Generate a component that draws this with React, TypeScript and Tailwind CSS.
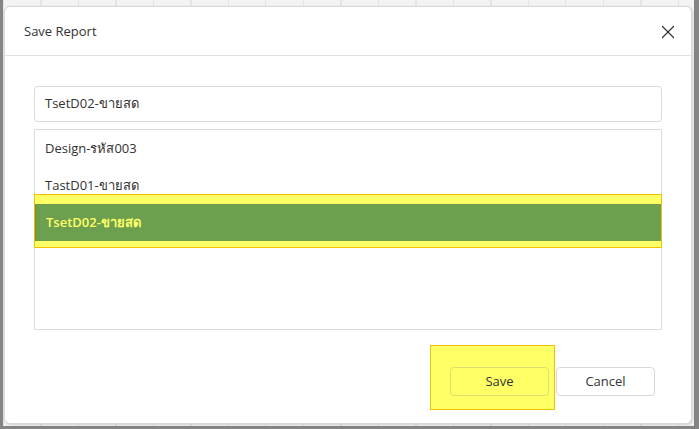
import { X } from 'lucide-react';

const items = ['Design-รหัส003', 'TastD01-ขายสด', 'TsetD02-ขายสด'];

const App = () => {
  return (
    <div className="w-[699px] h-[429px] bg-[#858585] pl-[3px] pr-[5px] pb-[3px] font-['Open_Sans','Noto_Sans',sans-serif] text-[13px] text-[#333]">
      <div className="h-full bg-[#f3f3f3] bg-[repeating-linear-gradient(90deg,#e4e4e4_0px,#e4e4e4_1px,transparent_1px,transparent_37.5px)] pt-[6px] pl-px pr-[2px] pb-[2px]">
        <div className="h-full flex flex-col bg-white border border-[#d8d8d8] rounded-[6px] shadow-[1px_1px_3px_rgba(0,0,0,0.15)]">
          <div className="h-[49px] flex items-center justify-between pt-px pl-[19px] pr-[12px] border-b border-[#e2e2e2] shrink-0">
            <span className="text-[13px] text-[#333]">Save Report</span>
            <X size={22} strokeWidth={1.3} className="text-[#333]" />
          </div>

          <div className="flex-1 flex flex-col px-[29px] pt-[30px]">
            <div className="h-[36px] border border-[#dcdcdc] rounded-[4px] flex items-center px-[10px] text-[13px] text-[#333]">
              TsetD02-ขายสด
            </div>

            <div className="relative mt-[7px] h-[201px] border border-[#dcdcdc]">
              <div className="absolute -left-px -right-px top-[64px] h-[54px] bg-[#ffff66] border border-[#f2c200]" />
              {items.map((name, i) => {
                const selected = i === 2;
                return (
                  <div
                    key={name}
                    className={
                      selected
                        ? 'relative h-[37px] flex items-center pl-[10px] bg-[#6ca04f] border-l border-[#7a8a2a] text-[#ffff66] font-semibold'
                        : 'relative h-[37px] flex items-center pl-[10px] text-[#333]'
                    }
                  >
                    {name}
                  </div>
                );
              })}
            </div>

            <div className="flex justify-end gap-[7px] mt-[37px] pr-[7px]">
              <div className="relative">
                <div className="absolute -left-[20px] -top-[22px] w-[125px] h-[65px] bg-[#ffff66] border border-[#f2c200]" />
                <button className="relative w-[99px] h-[29px] pt-px rounded-[4px] border border-[#e2dc70] text-[13px] text-[#333]">
                  Save
                </button>
              </div>
              <button className="w-[99px] h-[29px] pt-px rounded-[4px] border border-[#d8d8d8] bg-white text-[13px] text-[#333]">
                Cancel
              </button>
            </div>
          </div>
        </div>
      </div>
    </div>
  );
};

export default App;
